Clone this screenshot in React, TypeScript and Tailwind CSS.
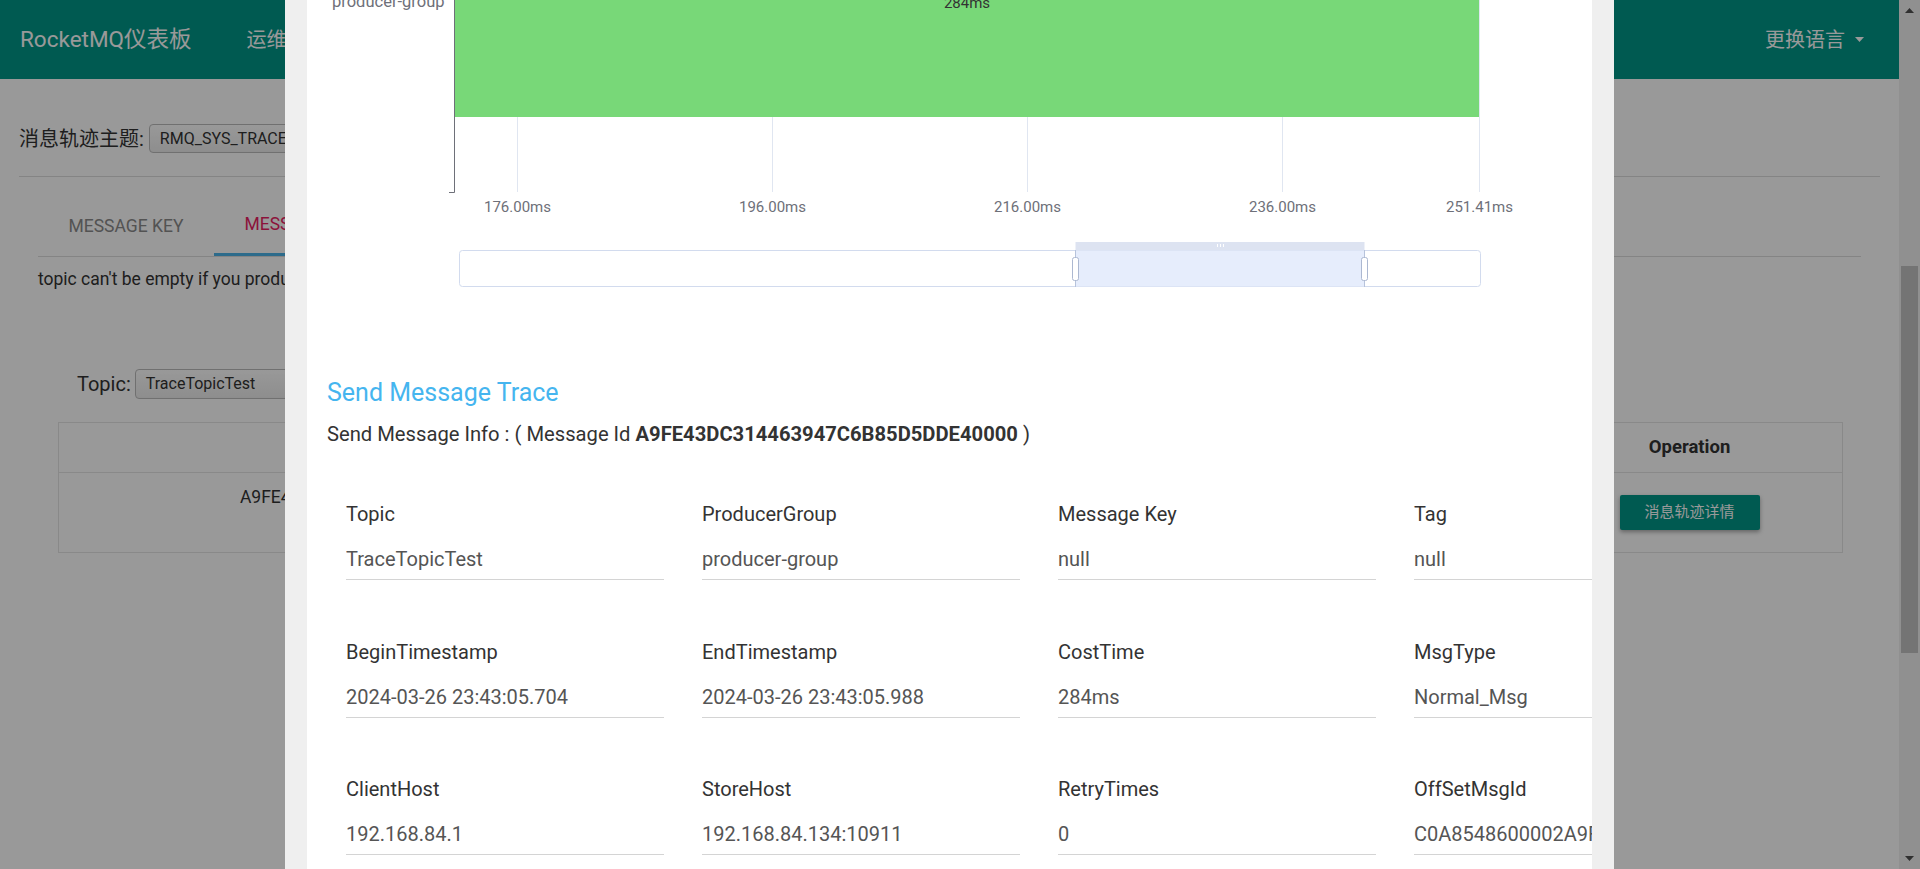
import React from 'react';

const navItems = ['运维', '驾驶舱', '集群', '主题', '消费者', '生产者', '消息', '消息轨迹'];

const fields = [
  { label: 'Topic', value: 'TraceTopicTest' },
  { label: 'ProducerGroup', value: 'producer-group' },
  { label: 'Message Key', value: 'null' },
  { label: 'Tag', value: 'null' },
  { label: 'BeginTimestamp', value: '2024-03-26 23:43:05.704' },
  { label: 'EndTimestamp', value: '2024-03-26 23:43:05.988' },
  { label: 'CostTime', value: '284ms' },
  { label: 'MsgType', value: 'Normal_Msg' },
  { label: 'ClientHost', value: '192.168.84.1' },
  { label: 'StoreHost', value: '192.168.84.134:10911' },
  { label: 'RetryTimes', value: '0' },
  { label: 'OffSetMsgId', value: 'C0A8548600002A9F00000000000A0B3C' },
];

const ticks = [
  { x: 210.5, text: '176.00ms' },
  { x: 465.5, text: '196.00ms' },
  { x: 720.5, text: '216.00ms' },
  { x: 975.5, text: '236.00ms' },
  { x: 1172.5, text: '251.41ms' },
];

function TraceChart() {
  return (
    <svg width="1285" height="340" className="block" fontFamily="Roboto, sans-serif">
      {ticks.map((t) => (
        <line key={t.text} x1={t.x} x2={t.x} y1={0} y2={192} stroke="#E0E6F1" strokeWidth="1" />
      ))}
      <rect x="148" y="-120" width="1024" height="237" fill="#78D878" />
      <line x1="147.5" x2="147.5" y1="0" y2="192.5" stroke="#6E7079" strokeWidth="1" />
      <line x1="142" x2="147.5" y1="192.5" y2="192.5" stroke="#6E7079" strokeWidth="1" />
      <text x="137.5" y="6.5" fontSize="16.5" fill="#6E7079" textAnchor="end">producer-group</text>
      <text x="660" y="8" fontSize="15" fill="#333" textAnchor="middle">284ms</text>
      {ticks.map((t) => (
        <text key={t.text} x={t.x} y="212" fontSize="15" fill="#6E7079" textAnchor="middle">
          {t.text}
        </text>
      ))}
      {/* data zoom slider */}
      <rect x="152.5" y="250.5" width="1021" height="36" rx="3" fill="none" stroke="#D2DBEE" />
      <rect x="768.5" y="250.5" width="289" height="36" fill="#E6EDFC" />
      <line x1="768.5" x2="768.5" y1="250" y2="287" stroke="#B7C3DB" />
      <line x1="1057.5" x2="1057.5" y1="250" y2="287" stroke="#B7C3DB" />
      <rect x="768.5" y="242" width="289" height="8" fill="#DDE3F1" />
      <line x1="910.5" x2="910.5" y1="244" y2="247" stroke="#fff" />
      <line x1="913.5" x2="913.5" y1="244" y2="247" stroke="#fff" />
      <line x1="916.5" x2="916.5" y1="244" y2="247" stroke="#fff" />
      <rect x="765.5" y="257.5" width="6" height="23" rx="2" fill="#fff" stroke="#ACB8D1" />
      <rect x="1054.5" y="257.5" width="6" height="23" rx="2" fill="#fff" stroke="#ACB8D1" />
    </svg>
  );
}

function Caret() {
  return (
    <svg width="9" height="5" viewBox="0 0 9 5">
      <path d="M0 0h9L4.5 5z" fill="currentColor" />
    </svg>
  );
}

function Scrollbar() {
  return (
    <div className="w-[21px] bg-[#f1f1f1] flex flex-col">
      <div className="h-[21px] flex items-center justify-center text-[#505050]">
        <svg width="9" height="5" viewBox="0 0 9 5">
          <path d="M0 5h9L4.5 0z" fill="currentColor" />
        </svg>
      </div>
      <div className="flex-1">
        <div className="mt-[245px] mx-[2px] h-[387px] bg-[#c1c1c1]" />
      </div>
      <div className="h-[21px] flex items-center justify-center text-[#505050]">
        <Caret />
      </div>
    </div>
  );
}

function Page() {
  return (
    <div className="flex-1 bg-white">
      <header className="h-[79px] bg-[#009688] flex items-center pl-[20px] pr-[35px] text-white">
        <span className="text-[22.5px]">RocketMQ仪表板</span>
        <nav className="ml-[55px] flex gap-[40px] text-[20px]">
          {navItems.map((n) => (
            <span key={n}>{n}</span>
          ))}
        </nav>
        <div className="ml-auto flex items-center gap-[10px] text-[20px]">
          更换语言
          <Caret />
        </div>
      </header>

      <main className="px-[19px]">
        <div className="mt-[45px] h-[29px] flex items-center text-[20px] text-[#333]">
          <span>消息轨迹主题:</span>
          <div className="ml-[5px] h-[29px] w-[230px] rounded-[4px] border border-[#bbb] bg-gradient-to-b from-white to-[#ececec] px-[10px] flex items-center text-[16px]">
            RMQ_SYS_TRACE_TOPIC
          </div>
        </div>
        <div className="mt-[23px] border-t border-[#dcdcdc]" />

        <div className="mx-[19px] mt-[19px] flex border-b border-[#ddd]">
          <div className="px-[30.5px] h-[60px] flex items-center justify-center text-[17.5px] text-[#8a8a8a]">
            MESSAGE KEY
          </div>
          <div className="px-[30.5px] h-[60px] flex items-center justify-center text-[17.5px] text-[#e91e63] border-b-[3px] border-[#4bb3e8]">
            MESSAGE ID
          </div>
        </div>
        <p className="mx-[19px] mt-[10px] text-[17.5px] leading-[24px] text-[#333]">
          topic can't be empty if you producer client version is lower than 4.3.0
        </p>

        <div className="mt-[78px] ml-[58px] h-[30px] flex items-center text-[20px] text-[#333]">
          <span>Topic:</span>
          <div className="ml-[4px] h-[30px] w-[230px] rounded-[4px] border border-[#bbb] bg-gradient-to-b from-white to-[#ececec] px-[10px] flex items-center text-[16px]">
            TraceTopicTest
          </div>
        </div>

        <table className="mt-[23px] ml-[39px] w-[1785px] border-collapse border border-[#e4e4e4] text-[17.5px] text-[#333]">
          <thead>
            <tr className="h-[50px]">
              <th className="w-[690px] border border-[#e4e4e4] font-bold text-[18.5px]">Message ID</th>
              <th className="w-[262px] border border-[#e4e4e4] font-bold text-[18.5px]">Tag</th>
              <th className="w-[263px] border border-[#e4e4e4] font-bold text-[18.5px]">Message Key</th>
              <th className="w-[263px] border border-[#e4e4e4] font-bold text-[18.5px]">StoreTime</th>
              <th className="border border-[#e4e4e4] font-bold text-[18.5px]">Operation</th>
            </tr>
          </thead>
          <tbody>
            <tr className="h-[80px] align-top text-center">
              <td className="pt-[12px] leading-[24px] border border-[#e4e4e4]">A9FE43DC314463947C6B85D5DDE40000</td>
              <td className="pt-[12px] leading-[24px] border border-[#e4e4e4]">TagA</td>
              <td className="pt-[12px] leading-[24px] border border-[#e4e4e4]">OrderID188</td>
              <td className="pt-[12px] leading-[24px] border border-[#e4e4e4]">2024-03-26 23:43:05</td>
              <td className="pt-[22px] border border-[#e4e4e4]">
                <button className="w-[140px] h-[35px] rounded-[2px] bg-[#009688] text-white text-[15px] shadow-[0_2px_4px_rgba(0,0,0,0.35)]">
                  消息轨迹详情
                </button>
              </td>
            </tr>
          </tbody>
        </table>
      </main>
    </div>
  );
}

export default function App() {
  return (
    <div className="relative w-[1920px] h-[869px] overflow-hidden flex font-[Roboto,'Noto_Sans_CJK_SC',sans-serif]">
      <Page />
      <Scrollbar />

      <div className="absolute inset-0 bg-black/40" />

      <div className="absolute top-0 bottom-0 left-[285px] w-[1329px] bg-[#efefef] px-[22px]">
        <div className="h-full bg-white overflow-hidden">
          <TraceChart />
          <div className="pl-[20px]">
            <h3 className="mt-[39px] text-[25px] leading-[28px] text-[#45b5ef]">Send Message Trace</h3>
            <p className="mt-[14px] text-[20.2px] leading-[26px] text-[#333] whitespace-nowrap">
              Send Message Info : ( Message Id <b className="font-bold">A9FE43DC314463947C6B85D5DDE40000</b> )
            </p>
            <div className="mt-[53px] grid grid-cols-[repeat(4,356px)] gap-y-[57.7px]">
              {fields.map((f) => (
                <div key={f.label} className="px-[19px]">
                  <div className="text-[20px] leading-[28px] text-[#333]">{f.label}</div>
                  <div className="mt-[17px] pb-[6px] border-b border-[#d4d4d4] text-[20px] leading-[28px] text-[#555] whitespace-nowrap overflow-hidden">
                    {f.value}
                  </div>
                </div>
              ))}
            </div>
          </div>
        </div>
      </div>
    </div>
  );
}
